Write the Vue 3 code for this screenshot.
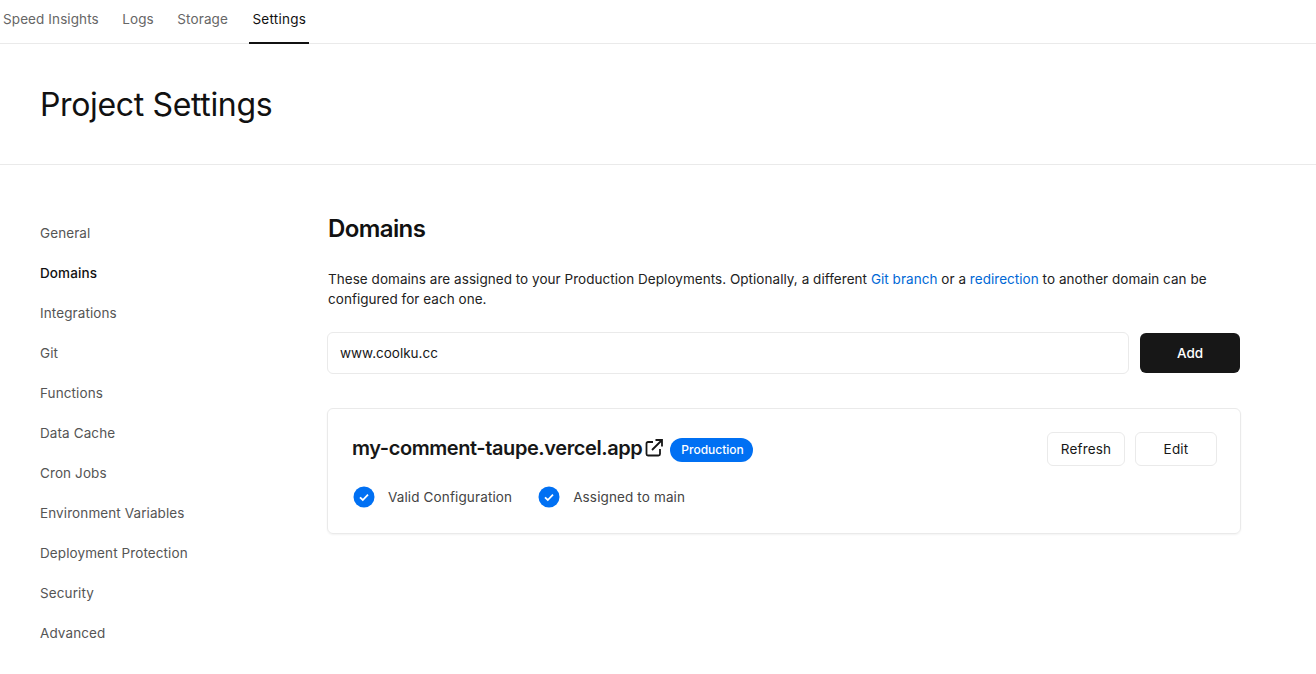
<script setup>
const tabs = [
  { label: 'Speed Insights' },
  { label: 'Logs' },
  { label: 'Storage' },
  { label: 'Settings', active: true },
]
const side = ['General', 'Domains', 'Integrations', 'Git', 'Functions', 'Data Cache', 'Cron Jobs', 'Environment Variables', 'Deployment Protection', 'Security', 'Advanced']
const checks = ['Valid Configuration', 'Assigned to main']
</script>

<template>
  <div class="page">
    <nav class="tabs">
      <a v-for="t in tabs" :key="t.label" class="tab" :class="{ active: t.active }">{{ t.label }}</a>
    </nav>
    <header class="head">
      <h1>Project Settings</h1>
    </header>
    <div class="body">
      <aside class="side">
        <a v-for="s in side" :key="s" class="side-item" :class="{ on: s === 'Domains' }">{{ s }}</a>
      </aside>
      <main class="main">
        <h2>Domains</h2>
        <p class="desc">These domains are assigned to your Production Deployments. Optionally, a different <a>Git branch</a> or a <a>redirection</a> to another domain can be configured for each one.</p>
        <div class="add-row">
          <div class="input">www.coolku.cc</div>
          <button class="add">Add</button>
        </div>
        <section class="card">
          <div class="card-top">
            <div class="title-row">
              <span class="domain">my-comment-taupe.vercel.app</span>
              <svg class="ext" width="20" height="20" viewBox="0 0 20 20" fill="none" stroke="#171717" stroke-width="1.8">
                <path d="M9 4H4a1.5 1.5 0 0 0-1.5 1.5V16A1.5 1.5 0 0 0 4 17.5h10.5A1.5 1.5 0 0 0 16 16v-5" />
                <path d="M8 12 17.5 2.5M11.5 2h6.5v6.5" />
              </svg>
              <span class="badge">Production</span>
            </div>
            <div class="actions">
              <button class="btn refresh">Refresh</button>
              <button class="btn edit">Edit</button>
            </div>
          </div>
          <div class="checks">
            <div v-for="c in checks" :key="c" class="check">
              <svg width="22" height="22" viewBox="0 0 22 22">
                <circle cx="11" cy="11" r="10.5" fill="#0070f3" />
                <path d="M7 11.3l2.8 2.7L15 8.6" fill="none" stroke="#fff" stroke-width="1.8" />
              </svg>
              <span>{{ c }}</span>
            </div>
          </div>
        </section>
      </main>
    </div>
  </div>
</template>

<style scoped>
.page {
  width: 1316px;
  height: 674px;
  overflow: hidden;
  background: #fff;
  color: #171717;
  font-family: Inter, "Liberation Sans", sans-serif;
  font-size: 14px;
}
.tabs {
  display: flex;
  gap: 17.5px;
  height: 43px;
  border-bottom: 1px solid #eaeaea;
}
.tab {
  box-sizing: border-box;
  height: 44px;
  padding: 0 3px;
  line-height: 39px;
  font-size: 13.5px;
  letter-spacing: 0.1px;
  color: #666;
}
.tab.active {
  margin-left: 1px;
  letter-spacing: 0.25px;
  color: #111;
  border-bottom: 2px solid #111;
}
.head {
  height: 120px;
  border-bottom: 1px solid #eaeaea;
  padding-left: 40px;
  display: flex;
  align-items: center;
}
h1 {
  margin: 1px 0 0;
  font-size: 32px;
  font-weight: 400;
  letter-spacing: -0.35px;
  color: #111;
}
.body {
  display: flex;
  padding: 48px 0 0 40px;
}
.side {
  width: 287px;
  display: flex;
  flex-direction: column;
}
.side-item {
  height: 40px;
  line-height: 40px;
  font-size: 13.5px;
  letter-spacing: 0.1px;
  color: #555;
}
.side-item.on {
  color: #111;
  font-weight: 500;
}
.main {
  width: 914px;
  padding-top: 1px;
}
h2 {
  margin: 0 0 0 1px;
  font-size: 24px;
  line-height: 30px;
  font-weight: 600;
  letter-spacing: -0.6px;
  color: #111;
}
.desc {
  margin: 25px 0 0 1px;
  font-size: 13.5px;
  line-height: 20px;
  letter-spacing: 0.04px;
  color: #222;
}
.desc a {
  color: #0068d6;
}
.add-row {
  display: flex;
  gap: 11px;
  margin: 23px 1px 0 0;
}
.input {
  box-sizing: border-box;
  flex: 1;
  height: 42px;
  border: 1px solid #eaeaea;
  border-radius: 6px;
  padding-left: 12px;
  line-height: 40px;
  font-size: 13.5px;
}
.add {
  width: 100px;
  height: 40px;
  margin-top: 1px;
  background: #171717;
  color: #fff;
  border: 0;
  border-radius: 6px;
  font: 500 13.5px Inter, "Liberation Sans", sans-serif;
}
.card {
  box-sizing: border-box;
  height: 126px;
  margin-top: 34px;
  border: 1px solid #eaeaea;
  border-radius: 6px;
  box-shadow: 0 1px 2px rgba(0, 0, 0, 0.05);
  padding: 23px 23px 0 24px;
}
.card-top {
  display: flex;
  justify-content: space-between;
  align-items: center;
  height: 34px;
}
.title-row {
  display: flex;
  align-items: center;
}
.domain {
  font-size: 20px;
  font-weight: 600;
  letter-spacing: -0.42px;
  color: #171717;
  padding-bottom: 2px;
}
.ext {
  margin: 0 0 2px 2px;
}
.badge {
  margin: 2px 0 0 6px;
  height: 24px;
  line-height: 24px;
  padding: 0 9px 0 11px;
  border-radius: 12px;
  background: #0070f3;
  color: #fff;
  font-size: 12px;
  font-weight: 500;
}
.actions {
  display: flex;
  gap: 10px;
}
.btn {
  box-sizing: border-box;
  height: 34px;
  background: #fff;
  border: 1px solid #eaeaea;
  border-radius: 6px;
  font: 400 13.5px Inter, "Liberation Sans", sans-serif;
  letter-spacing: 0.2px;
  color: #171717;
  padding: 0;
}
.refresh { width: 78px; }
.edit { width: 82px; }
.checks {
  display: flex;
  gap: 26px;
  margin-top: 20px;
  margin-left: 1px;
}
.check {
  display: flex;
  align-items: center;
  gap: 13px;
  height: 22px;
  font-size: 13.5px;
  letter-spacing: 0.13px;
  color: #444;
}
</style>
